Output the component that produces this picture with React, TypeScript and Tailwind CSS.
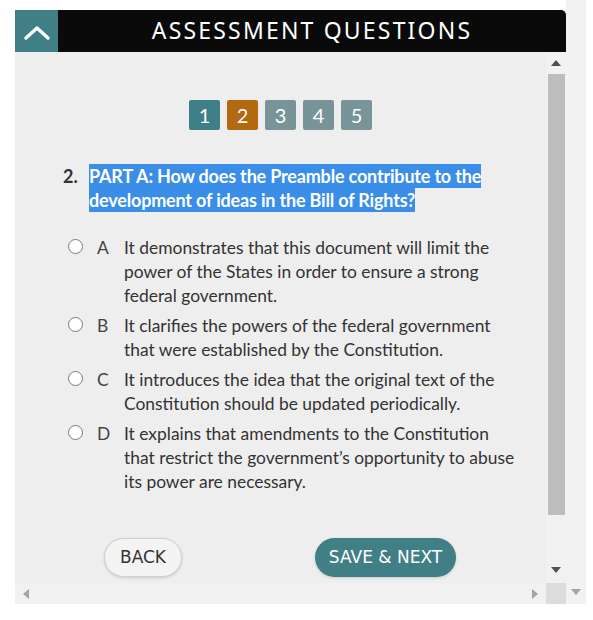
import * as React from "react";

const options = [
  {
    key: "A",
    text: "It demonstrates that this document will limit the power of the States in order to ensure a strong federal government.",
  },
  {
    key: "B",
    text: "It clarifies the powers of the federal government that were established by the Constitution.",
  },
  {
    key: "C",
    text: "It introduces the idea that the original text of the Constitution should be updated periodically.",
  },
  {
    key: "D",
    text: "It explains that amendments to the Constitution that restrict the government\u2019s opportunity to abuse its power are necessary.",
  },
];

const pages = [
  { n: 1, cls: "bg-[#3e7f87]" },
  { n: 2, cls: "bg-[#b3690f]" },
  { n: 3, cls: "bg-[#789499]" },
  { n: 4, cls: "bg-[#789499]" },
  { n: 5, cls: "bg-[#789499]" },
];

function Tri({ dir, color }: { dir: "up" | "down" | "left" | "right"; color: string }) {
  const pts = {
    up: "0,6 5,0 10,6",
    down: "0,0 10,0 5,6",
    left: "6,0 6,10 0,5",
    right: "0,0 0,10 6,5",
  }[dir];
  const horiz = dir === "left" || dir === "right";
  return (
    <svg width={horiz ? 6 : 10} height={horiz ? 10 : 6} viewBox={horiz ? "0 0 6 10" : "0 0 10 6"}>
      <polygon points={pts} fill={color} />
    </svg>
  );
}

export default function App() {
  return (
    <div className="w-[593px] h-[620px] bg-white flex overflow-hidden" style={{ fontFamily: "Lato, 'Open Sans', sans-serif" }}>
      {/* assessment panel */}
      <div className="pt-[10px] pl-[15px] w-[566px] flex flex-col">
        <header className="h-[42px] flex">
          <div className="w-[43px] bg-[#417f87] flex items-center justify-center pt-[4px]">
            <svg width="28" height="16" viewBox="0 0 28 16">
              <path d="M3 13 L14 3 L25 13" fill="none" stroke="white" strokeWidth="3.4" strokeLinecap="round" strokeLinejoin="round" />
            </svg>
          </div>
          <div className="flex-1 bg-[#0a0a0a] rounded-tr-[5px] flex items-center justify-center pb-[1px]">
            <span className="text-white text-[23px] tracking-[0.095em] leading-none" style={{ fontFamily: "'Noto Sans', sans-serif" }}>
              ASSESSMENT QUESTIONS
            </span>
          </div>
        </header>

        <div className="h-[531px] flex">
          <main className="w-[531px] bg-[#eeeeee] flex flex-col">
            <div className="mt-[48px] flex justify-center gap-[7px]">
              {pages.map((p) => (
                <div key={p.n} className={`w-[31px] h-[30px] rounded-[2px] ${p.cls} flex items-center justify-center text-white text-[20px]`}>
                  {p.n}
                </div>
              ))}
            </div>

            <div className="mt-[34px] pl-[48px] flex text-[18px] leading-[24px] font-bold text-[#333]">
              <span className="w-[26px]">2.</span>
              <p className="w-[400px] tracking-[-0.01em]">
                <span className="bg-[#3a8ee8] text-white py-[1px] box-decoration-clone">
                  PART A: How does the Preamble contribute to the development of ideas in the Bill of Rights?
                </span>
              </p>
            </div>

            <ul className="mt-[24px] flex flex-col gap-[6px]">
              {options.map((o) => (
                <li key={o.key} className="flex text-[17.4px] leading-[24px] text-[#333]">
                  <span className="ml-[53px] mt-[3px] w-[15px] h-[15px] shrink-0 rounded-full border border-[#7a7a7a] bg-white" />
                  <span className="ml-[14px] w-[27px] shrink-0 text-[#444]">{o.key}</span>
                  <span className="w-[396px]">{o.text}</span>
                </li>
              ))}
            </ul>

            <div className="mt-[44px] flex pl-[89px]" style={{ fontFamily: "'DejaVu Sans', sans-serif" }}>
              <button className="w-[78px] h-[39px] rounded-full bg-[#f4f4f4] border border-[#d0d0d0] shadow-[0_1px_3px_rgba(0,0,0,0.15)] text-[17px] text-[#333]">
                BACK
              </button>
              <button className="ml-[133px] w-[141px] h-[39px] rounded-full bg-[#417f87] text-white text-[17px] shadow-[0_1px_3px_rgba(0,0,0,0.15)]">
                SAVE &amp; NEXT
              </button>
            </div>
          </main>
          {/* vertical scrollbar */}
          <div className="w-[20px] bg-[#f1f1f1] flex flex-col items-center">
            <div className="h-[22px] flex items-center justify-center">
              <Tri dir="up" color="#505050" />
            </div>
            <div className="w-[17px] h-[441px] bg-[#bdbdbd]" />
            <div className="flex-1 flex items-end pb-[10px]">
              <Tri dir="down" color="#505050" />
            </div>
          </div>
        </div>

        {/* horizontal scrollbar */}
        <div className="h-[21px] flex">
          <div className="w-[531px] bg-[#f1f1f1] flex items-center justify-between px-[8px]">
            <Tri dir="left" color="#a3a3a3" />
            <Tri dir="right" color="#a3a3a3" />
          </div>
          <div className="w-[20px] bg-[#dcdcdc]" />
        </div>
      </div>

      {/* page scrollbar */}
      <div className="w-[20px] h-[604px] bg-[#f2f2f2] flex flex-col items-center justify-end pb-[9px]">
        <Tri dir="down" color="#a3a3a3" />
      </div>
    </div>
  );
}
